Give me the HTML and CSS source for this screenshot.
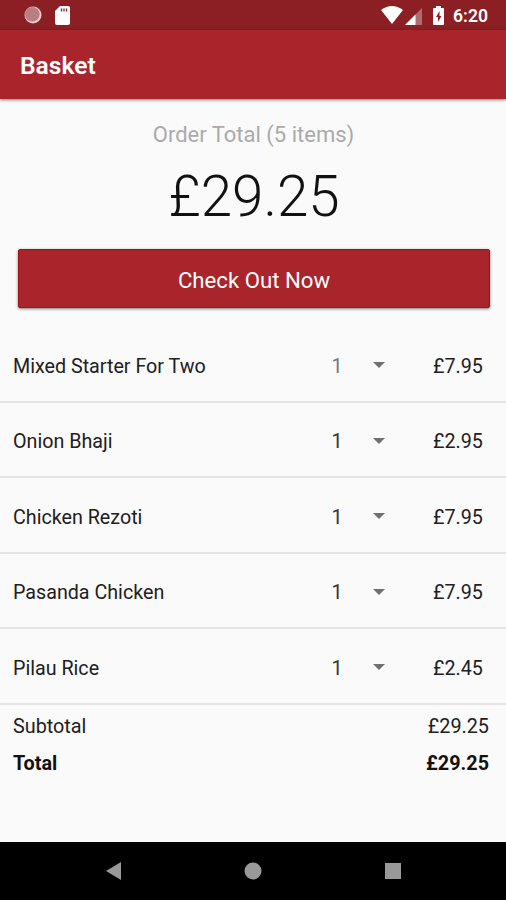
FILE: index.html
```html
<!DOCTYPE html>
<html lang="en"><head><meta charset="utf-8"><title>Basket</title><link rel="stylesheet" href="styles.css"></head>
<body>
<div class="status"><svg class="ring" viewBox="0 0 18 18"><circle cx="9" cy="9" r="8.5"/><circle class="in" cx="8.300" cy="8.300" r="7.300"/></svg><svg class="sd" viewBox="0 0 15 19"><path d="M5 0H13Q15 0 15 2V17Q15 19 13 19H2Q0 19 0 17V5Z"/><path class="slots" d="M6.500 2.500v3M9 2.500v3M11.500 2.500v3"/></svg><span class="grow"></span><svg class="wifi" viewBox="0 0 22 18"><path d="M0 4Q11-4 22 4L11 18Z"/></svg><svg class="signal" viewBox="0 0 17 17"><path class="dim" d="M17 0V17H0Z"/><path d="M10.500 6.500V17H0Z"/></svg><svg class="battery" viewBox="0 0 11 19"><path d="M3 2V0H8V2H10Q11 2 11 3V18Q11 19 10 19H1Q0 19 0 18V3Q0 2 1 2Z"/><path class="bolt" d="M6.500 5L3 11H5V16L8.500 10H6.500Z"/></svg><span class="time">6:20</span></div>
<header class="bar"><h1>Basket</h1></header>
<main>
<p class="caption">Order Total (5 items)</p>
<p class="amount">£29.25</p>
<button class="checkout">Check Out Now</button>
<ul class="items">
<li><span class="name">Mixed Starter For Two</span><span class="qty first">1</span><i class="caret"></i><span class="price">£7.95</span></li>
<li><span class="name">Onion Bhaji</span><span class="qty">1</span><i class="caret"></i><span class="price">£2.95</span></li>
<li><span class="name">Chicken Rezoti</span><span class="qty">1</span><i class="caret"></i><span class="price">£7.95</span></li>
<li><span class="name">Pasanda Chicken</span><span class="qty">1</span><i class="caret"></i><span class="price">£7.95</span></li>
<li><span class="name">Pilau Rice</span><span class="qty">1</span><i class="caret"></i><span class="price">£2.45</span></li>
</ul>
<div class="sum"><span>Subtotal</span><span>£29.25</span></div>
<div class="sum total"><span>Total</span><span>£29.25</span></div>
</main>
<nav class="nav"><svg viewBox="0 0 18 18"><path d="M16 0V18L1 9Z"/></svg><svg viewBox="0 0 18 18"><circle cx="9" cy="9" r="8.500"/></svg><svg viewBox="0 0 18 18"><path d="M1 1H17V17H1Z"/></svg></nav>
</body></html>
```
FILE: styles.css
```css
* { box-sizing: border-box; }
body { margin: 0; width: 506px; height: 900px; display: flex; flex-direction: column; background: #fafafa; font-family: Roboto, sans-serif; color: #202020; overflow: hidden; }
h1, p, ul { margin: 0; padding: 0; }
.status { height: 30px; flex: none; background: #8b1f24; display: flex; align-items: center; padding: 0 18px 0 23.5px; color: #fff; }
.status svg { fill: #fff; flex: none; }
.grow { flex: 1; }
.ring { width: 18px; height: 18px; }
.status .ring { fill: #e6cccd; }
.status .ring .in { fill: #bd7c80; }
.sd { width: 15px; height: 19px; margin-left: 13.5px; }
.sd .slots { stroke: #8b1f24; stroke-width: 1.3; }
.wifi { width: 22px; height: 18px; }
.signal { width: 17px; height: 17px; margin-left: 2px; margin-top: 2px; }
.status .dim { fill: #b06b6f; }
.battery { width: 11px; height: 19px; margin-left: 11px; margin-top: 1px; }
.status .bolt { fill: #8b1f24; }
.time { font-size: 17.6px; font-weight: 600; margin-left: 9px; line-height: 30px; padding-top: 2px; }
.bar { height: 69px; flex: none; background: #a9242b; color: #fff; padding: 2px 20px 0; display: flex; align-items: center; box-shadow: 0 1px 3px rgba(0,0,0,.5); }
h1 { font-size: 24.6px; font-weight: 600; }
main { flex: 1; }
.caption { text-align: center; font-size: 22px; line-height: 28px; margin-top: 22px; padding-left: 1px; color: #aaa; }
.amount { text-align: center; font-size: 56.5px; line-height: 68px; font-weight: 300; margin-top: 14px; padding-left: 2px; color: #111; }
.checkout { display: block; width: 472px; height: 59px; margin: 18px 0 0 18px; padding: 2px 0 0; border: 1px solid #a01118; border-radius: 2px; background: #a9242b; color: #fff; font: 22.200px Roboto, sans-serif; box-shadow: 0 1px 3px rgba(0,0,0,.5); }
.items { list-style: none; margin-top: 19px; }
.items li { height: 75.5px; display: grid; grid-template-columns: 318.5px 46.5px 55px 1fr; align-items: center; padding: 5px 0 0 13px; border-bottom: 2px solid #e4e4e4; font-size: 19.7px; }
.qty { color: #333; }
.qty.first { color: #777; }
.caret { width: 0; height: 0; border: 6px solid transparent; border-top-color: #707070; border-bottom: 0; margin: -2px 0 0 -5px; }
.sum { display: flex; justify-content: space-between; padding: 0 17px 0 13px; font-size: 19.800px; line-height: 37px; position: relative; top: 3px; }
.total { font-weight: 700; color: #111; }
.nav { height: 58px; flex: none; background: #000; display: flex; justify-content: center; align-items: center; gap: 122px; }
.nav svg { width: 18px; height: 18px; fill: #999; }
.nav svg:first-child { position: relative; left: 1px; }
```
